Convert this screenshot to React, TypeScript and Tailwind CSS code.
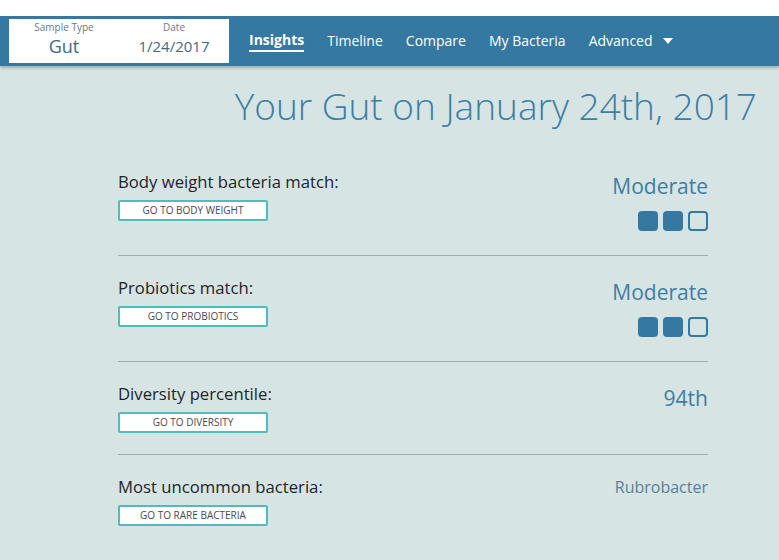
import { ReactNode } from 'react'

const font = { fontFamily: '"Open Sans", "Liberation Sans", sans-serif' }

function Squares({ filled }: { filled: number }) {
  return (
    <div className="flex gap-[5px] mt-[11px]">
      {[0, 1, 2].map(i => (
        <div
          key={i}
          className={
            i < filled
              ? 'w-[20px] h-[20px] rounded-[4px] bg-[#3578a1]'
              : 'w-[20px] h-[20px] rounded-[4px] border-2 border-[#3578a1]'
          }
        />
      ))}
    </div>
  )
}

function Row({ label, button, right, last }: { label: string; button: string; right: ReactNode; last?: boolean }) {
  return (
    <div className={`flex justify-between ${last ? '' : 'border-b border-[#a3adad]'}`}>
      <div className="pt-[21px] pb-[21px]">
        <div className="text-[16.7px] leading-[22px] text-[#1f2428]">{label}</div>
        <button className="mt-[7px] w-[150px] h-[21px] bg-white border-2 border-[#4fbcbd] rounded-[2px] text-[10px] text-[#4a4656]">
          {button}
        </button>
      </div>
      {right}
    </div>
  )
}

function Moderate() {
  return (
    <div className="flex flex-col items-end pt-[22px] pb-[24px]">
      <div className="text-[21px] leading-[28px] text-[#3d7ea6]">Moderate</div>
      <Squares filled={2} />
    </div>
  )
}

export default function App() {
  return (
    <div className="w-[779px] h-[560px] bg-[#d6e4e4] overflow-hidden" style={font}>
      <div className="h-[16px] bg-white" />
      <div className="h-[50px] bg-[#3578a1] flex items-center shadow-[0_2px_3px_rgba(0,0,0,0.25)] relative">
        <div className="ml-[9px] w-[220px] h-[44px] bg-white flex">
          <div className="w-[110px] flex flex-col items-center pt-[1px]">
            <span className="text-[10px] leading-[14px] text-[#6a7a86]">Sample Type</span>
            <span className="text-[18px] leading-[24px] text-[#3d6a8a]">Gut</span>
          </div>
          <div className="w-[110px] flex flex-col items-center pt-[1px]">
            <span className="text-[10px] leading-[14px] text-[#6a7a86]">Date</span>
            <span className="text-[15px] leading-[24px] text-[#3d6a8a]">1/24/2017</span>
          </div>
        </div>
        <nav className="flex items-center ml-[20px] gap-[23px] text-[14px] text-white">
          <span className="font-bold border-b-2 border-white leading-[20px]">Insights</span>
          <span className="leading-[20px]">Timeline</span>
          <span className="leading-[20px]">Compare</span>
          <span className="leading-[20px]">My Bacteria</span>
          <span className="leading-[20px] flex items-center gap-[10px]">
            Advanced
            <svg width="10" height="6" viewBox="0 0 10 6"><path d="M0 0h10L5 6z" fill="white" /></svg>
          </span>
        </nav>
      </div>
      <h1 className="text-right pr-[22px] mt-[16px] text-[37px] leading-[48px] font-light text-[#3d7ea6]">
        Your Gut on January 24th, 2017
      </h1>
      <div className="ml-[118px] w-[590px] mt-[20px]">
        <Row label="Body weight bacteria match:" button="GO TO BODY WEIGHT" right={<Moderate />} />
        <Row label="Probiotics match:" button="GO TO PROBIOTICS" right={<Moderate />} />
        <Row
          label="Diversity percentile:"
          button="GO TO DIVERSITY"
          right={<div className="pt-[22px] text-[21px] leading-[28px] text-[#3d7ea6]">94th</div>}
        />
        <Row
          label="Most uncommon bacteria:"
          button="GO TO RARE BACTERIA"
          last
          right={<div className="pt-[21px] text-[16px] leading-[22px] text-[#5b7f98]">Rubrobacter</div>}
        />
      </div>
    </div>
  )
}
